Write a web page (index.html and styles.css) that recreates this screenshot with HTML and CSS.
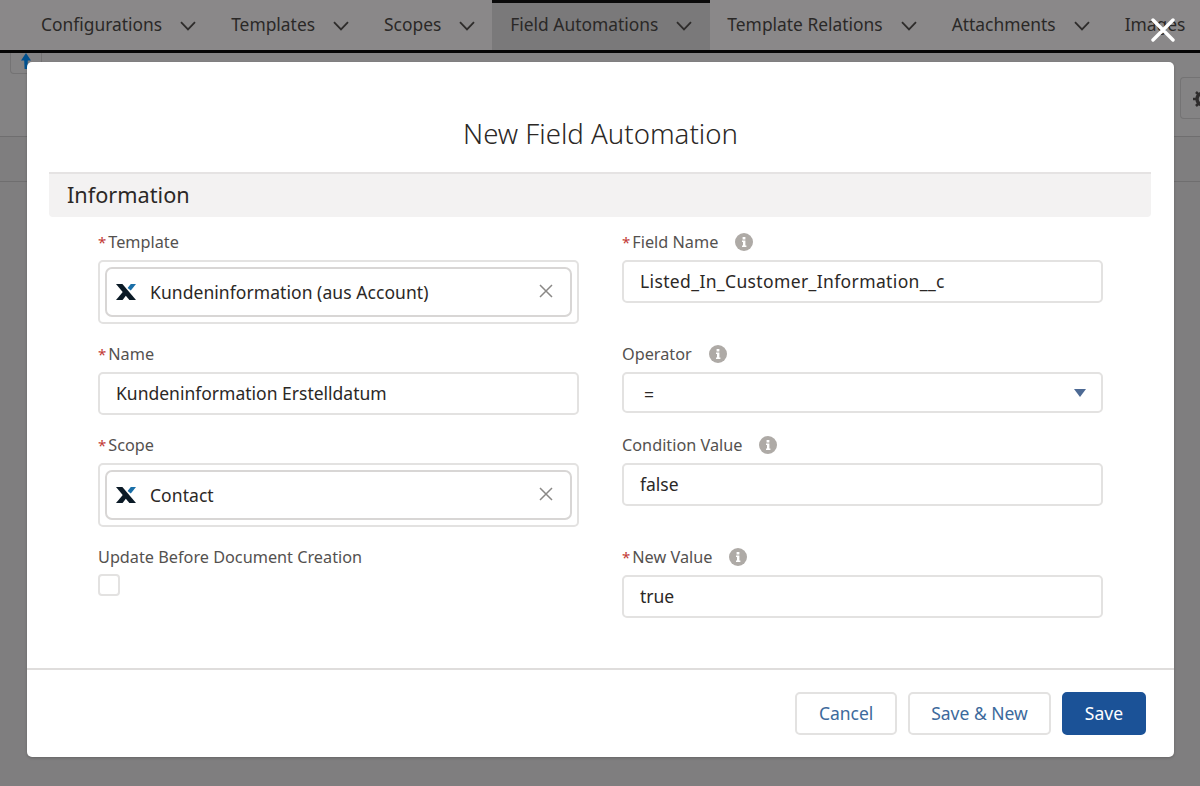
FILE: index.html
```html
<!DOCTYPE html>
<html lang="en">
<head>
<meta charset="utf-8">
<title>New Field Automation</title>
<link rel="stylesheet" href="styles.css">
</head>
<body>
<svg class="defs" width="0" height="0" aria-hidden="true">
  <symbol id="chev" viewBox="0 0 16 10"><path d="M1 1.2 8 8.4 15 1.2" fill="none" stroke="currentColor" stroke-width="1.8"/></symbol>
  <symbol id="logo" viewBox="0 0 22 18"><path d="M1 1h6.4L21 17h-6.6L1 1Z" fill="#0b1a26"/><path d="M1 17 8.2 8.4l3.2 3.6L7.6 17H1Z" fill="#0b1a26"/><path d="M12.6 5 15.8 1H21l-5.2 6.6L12.6 5Z" fill="#1a6fa8"/></symbol>
  <symbol id="info" viewBox="0 0 18 18"><circle cx="9" cy="9" r="9" fill="#aeaaa6"/><path d="M7.6 4h2.8v2.4H7.6ZM7 7.6h3.4v5h1v1.4H7v-1.4h1v-3.6H7Z" fill="#fff"/></symbol>
  <symbol id="clear" viewBox="0 0 14 14"><path d="M1 1 13 13M13 1 1 13" stroke="#8a8886" stroke-width="1.5" fill="none"/></symbol>
</svg>

<nav class="tabs">
  <a class="tab">Configurations<svg class="chev"><use href="#chev"/></svg></a>
  <a class="tab">Templates<svg class="chev"><use href="#chev"/></svg></a>
  <a class="tab">Scopes<svg class="chev"><use href="#chev"/></svg></a>
  <a class="tab active">Field Automations<svg class="chev"><use href="#chev"/></svg></a>
  <a class="tab">Template Relations<svg class="chev"><use href="#chev"/></svg></a>
  <a class="tab">Attachments<svg class="chev"><use href="#chev"/></svg></a>
  <a class="tab">Images</a>
</nav>
<div class="page-head">
  <div class="pin-btn"><svg class="pin" viewBox="0 0 10 16"><path d="M5 0 10 7.5H6.8L6.4 16H3.6L3.2 7.5H0Z" fill="#00518f"/></svg></div>
  <div class="gear-btn"><svg class="gear" viewBox="0 0 20 20"><circle cx="10" cy="10" r="6" fill="none" stroke="#2e2c2c" stroke-width="3.4"/><path d="M10 0v20M0 10h20M3 3l14 14M17 3 3 17" stroke="#2e2c2c" stroke-width="2.6" stroke-dasharray="3 14 3 0"/></svg></div>
</div>
<div class="page-sub"></div>

<svg class="close" viewBox="0 0 24 24" aria-label="Close"><path d="M2 2 22 22M22 2 2 22" stroke="#fff" stroke-width="3.4" stroke-linecap="round" fill="none"/></svg>

<main class="modal">
  <h1 class="title">New Field Automation</h1>
  <h2 class="section">Information</h2>
  <div class="form">
    <div class="col">
      <div class="field f-lookup">
        <label class="lbl"><span class="req">*</span>Template</label>
        <div class="lookup"><div class="pill"><svg class="logo"><use href="#logo"/></svg><span class="pill-text">Kundeninformation (aus Account)</span><svg class="clear"><use href="#clear"/></svg></div></div>
      </div>
      <div class="field f-name">
        <label class="lbl"><span class="req">*</span>Name</label>
        <div class="input">Kundeninformation Erstelldatum</div>
      </div>
      <div class="field f-scope">
        <label class="lbl"><span class="req">*</span>Scope</label>
        <div class="lookup"><div class="pill"><svg class="logo"><use href="#logo"/></svg><span class="pill-text">Contact</span><svg class="clear"><use href="#clear"/></svg></div></div>
      </div>
      <div class="field">
        <label class="lbl">Update Before Document Creation</label>
        <div class="check"></div>
      </div>
    </div>
    <div class="col">
      <div class="field f-fname">
        <label class="lbl"><span class="req">*</span>Field Name<svg class="info"><use href="#info"/></svg></label>
        <div class="input api-name">Listed_In_Customer_Information__c</div>
      </div>
      <div class="field f-op">
        <label class="lbl">Operator<svg class="info"><use href="#info"/></svg></label>
        <div class="input select">=<span class="caret"></span></div>
      </div>
      <div class="field f-cond">
        <label class="lbl">Condition Value<svg class="info"><use href="#info"/></svg></label>
        <div class="input">false</div>
      </div>
      <div class="field">
        <label class="lbl"><span class="req">*</span>New Value<svg class="info"><use href="#info"/></svg></label>
        <div class="input">true</div>
      </div>
    </div>
  </div>
  <footer class="foot">
    <button class="btn cancel">Cancel</button>
    <button class="btn">Save &amp; New</button>
    <button class="btn primary">Save</button>
  </footer>
</main>
</body>
</html>
```
FILE: styles.css
```css
* { box-sizing: border-box; }
html, body { margin: 0; height: 100%; }
body {
  width: 1200px; height: 786px; overflow: hidden; position: relative;
  background: #7f7e7f; color: #2b2826;
  font-family: "Noto Sans", "Lato", sans-serif;
  font-size: 17.5px;
}
.defs { position: absolute; }
.tabs {
  display: flex; height: 53px; padding-left: 23px;
  background: #8a8889; border-bottom: 3px solid #050505;
  white-space: nowrap; overflow: hidden;
}
.tab {
  display: flex; align-items: center; height: 50px; padding: 0 17px 2px 18px;
  color: #2a2827; font-size: 17.4px; gap: 18px; flex: none;
}
.tab.active {
  background: #7a797a; border-top: 3px solid #0a0a0a;
  padding-right: 18px; padding-bottom: 5px; margin-right: -1px;
}
.chev { width: 16px; height: 10px; color: #2e2c2b; margin-top: 4px; }
.page-head {
  height: 84px; display: flex; justify-content: space-between; align-items: flex-start;
  border-bottom: 1px solid #6f6e6f; background: #848384;
}
.pin-btn {
  width: 32px; height: 21px; margin-left: 10px;
  border: 1px solid #747374; border-top: 0; border-radius: 0 0 4px 4px;
  display: flex; justify-content: center;
}
.pin { width: 10px; height: 16px; }
.gear-btn {
  width: 20px; height: 42px; margin-top: 24px; overflow: hidden; flex: none;
  border: 1px solid #747374; border-right: 0; border-radius: 4px 0 0 4px;
  padding: 11px 0 0 12px;
}
.gear { width: 20px; height: 20px; display: block; }
.page-sub { height: 45px; border-bottom: 1px solid #6f6e6f; }
.close { position: absolute; left: 1151px; top: 18px; width: 24px; height: 24px; z-index: 2; }
.modal {
  position: absolute; left: 27px; top: 62px; width: 1147px; height: 695px;
  background: #fff; border-radius: 5px; display: flex; flex-direction: column;
  box-shadow: 0 1px 3px rgba(0,0,0,.2);
}
.title {
  margin: 0; height: 110px; padding-top: 52px; line-height: 38px;
  text-align: center; font-weight: 300; font-size: 27.6px; color: #2b2826;
}
.section {
  margin: 0 23px 0 22px; height: 45px; padding-left: 18px; line-height: 41px;
  background: #f3f2f2; border-top: 2px solid #e5e3e3; border-radius: 0 0 4px 4px;
  font-weight: 400; font-size: 21.7px; color: #2b2826;
}
.form {
  flex: 1; display: grid; grid-template-columns: 481px 481px; column-gap: 43px;
  padding: 14px 0 0 71px;
}
.field { display: flex; flex-direction: column; }
.lbl {
  display: flex; align-items: center; height: 22px; margin-bottom: 7px;
  font-size: 16.25px; color: #54514f;
}
.req { color: #c23934; margin-right: 2px; font-size: 15px; }
.info { width: 18px; height: 18px; margin-left: 17px; }
.input {
  height: 43px; line-height: 38px; padding: 0 16px; position: relative;
  border: 2px solid #e3e2e1; border-radius: 5px; background: #fff; color: #2b2826;
}
.api-name { letter-spacing: .37px; }
.select { height: 41px; line-height: 40px; padding-left: 20px; }
.caret {
  position: absolute; right: 15px; top: 15px; width: 0; height: 0;
  border-left: 6px solid transparent; border-right: 6px solid transparent;
  border-top: 8px solid #4d6a94;
}
.lookup {
  height: 64px; padding: 5px; border: 2px solid #e3e2e1; border-radius: 5px;
}
.pill {
  display: flex; align-items: center; height: 100%; padding: 0 17px 0 8px;
  border: 2px solid #d8d6d5; border-radius: 7px;
}
.logo { width: 22px; height: 18px; flex: none; margin-right: 13px; }
.pill-text { flex: 1; color: #2b2826; letter-spacing: .06px; }
.clear { width: 14px; height: 14px; flex: none; margin-top: -2px; }
.f-lookup { height: 112px; }
.f-name { height: 91px; }
.f-scope { height: 112px; }
.f-fname { height: 112px; }
.f-op { height: 91px; }
.f-cond { height: 112px; }
.check {
  width: 22px; height: 22px; border: 2px solid #e3e2e1; border-radius: 4px; margin-top: -1px;
}
.foot {
  height: 89px; border-top: 2px solid #dfdddc; display: flex; justify-content: flex-end;
  align-items: flex-start; gap: 11px; padding: 22px 28px 0 0;
}
.btn {
  height: 43px; padding: 0 21px 2px; font: inherit; font-size: 17.5px; color: #3d6a9c;
  background: #fff; border: 2px solid #e3e2e1; border-radius: 5px;
}
.cancel { min-width: 102px; }
.primary { background: #1b5297; border-color: #1b5297; color: #fff; }
```
